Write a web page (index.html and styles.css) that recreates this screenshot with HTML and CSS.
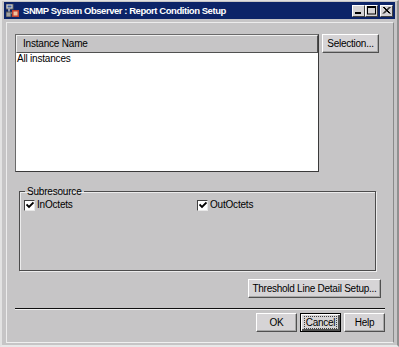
FILE: index.html
```html
<!DOCTYPE html>
<html lang="en">
<head>
    <meta charset="UTF-8">
    <title>SNMP System Observer : Report Condition Setup</title>
    <link rel="stylesheet" href="styles.css">
</head>
<body>

    <div class="window">
        <!-- Title bar -->
        <div class="titlebar">
            <svg class="app-icon" width="13" height="13" viewBox="0 0 13 13">
                <rect x="0" y="0" width="7" height="5" fill="#d8d8d8" stroke="#606060" stroke-width="1"/>
                <rect x="1.5" y="1.5" width="4" height="2" fill="#4060a0"/>
                <rect x="6" y="6" width="7" height="7" fill="#c04030"/>
                <rect x="7.5" y="7.5" width="4" height="4" fill="#f0c0a0"/>
                <path d="M3 5 V9 H6" stroke="#ffffff" stroke-width="1" fill="none"/>
                <rect x="0" y="8" width="5" height="5" fill="#a0a0a0" stroke="#505050" stroke-width="1"/>
            </svg>
            <span class="title">SNMP System Observer : Report Condition Setup</span>
            <div class="win-buttons">
                <span class="win-btn"><svg width="11" height="9" viewBox="0 0 11 9"><rect x="2" y="6" width="6" height="2" fill="#000"/></svg></span>
                <span class="win-btn"><svg width="11" height="9" viewBox="0 0 11 9"><rect x="1.5" y="0.5" width="8" height="7.5" fill="none" stroke="#000"/><rect x="1" y="0" width="9" height="2" fill="#000"/></svg></span>
                <span class="win-btn close"><svg width="11" height="9" viewBox="0 0 11 9"><path d="M2 1 L8.5 7.5 M3 1 L9.5 7.5 M8.5 1 L2 7.5 M9.5 1 L3 7.5" stroke="#000" stroke-width="1"/></svg></span>
            </div>
        </div>

        <!-- Dialog body -->
        <div class="panel">
            <div class="top-row">
                <div class="table">
                    <div class="table-head">Instance Name</div>
                    <div class="table-row">All instances</div>
                </div>
                <button class="btn btn-selection">Selection...</button>
            </div>

            <fieldset class="group">
                <legend>Subresource</legend>
                <div class="checks">
                    <label class="check"><span class="box"><svg width="8" height="8" viewBox="0 0 8 8"><path d="M0.5 3.5 L3 6 L7.5 1.5" stroke="#000" stroke-width="1.8" fill="none"/></svg></span>InOctets</label>
                    <label class="check"><span class="box"><svg width="8" height="8" viewBox="0 0 8 8"><path d="M0.5 3.5 L3 6 L7.5 1.5" stroke="#000" stroke-width="1.8" fill="none"/></svg></span>OutOctets</label>
                </div>
            </fieldset>

            <div class="threshold-row">
                <button class="btn btn-threshold">Threshold Line Detail Setup...</button>
            </div>

            <div class="separator"></div>

            <div class="footer">
                <button class="btn btn-small">OK</button>
                <button class="btn btn-small focused"><span>Cancel</span></button>
                <button class="btn btn-small">Help</button>
            </div>
        </div>
    </div>

</body>
</html>
```

FILE: styles.css
```css
body {
    margin: 0;
    width: 399px;
    height: 347px;
    overflow: hidden;
    background-color: #e4e4e4;
    font-family: "Liberation Sans", Arial, sans-serif;
    font-size: 10px;
    letter-spacing: -0.2px;
    color: #000;
}

.window {
    box-sizing: border-box;
    width: 399px;
    height: 347px;
    padding: 1px 2px 2px 2px;
    background-color: #c6c5c6;
    border-left: 2px solid #e2e2e2;
    border-top: 1px solid #e2e2e2;
    border-right: 2px solid #909090;
    border-bottom: 2px solid #e8e8e8;
    display: flex;
    flex-direction: column;
}

/* Title bar */
.titlebar {
    height: 17px;
    background-color: #0c2468;
    display: flex;
    align-items: center;
    padding: 0 2px 0 2px;
}

.app-icon {
    margin-right: 4px;
}

.title {
    flex: 1;
    color: #fff;
    font-family: "Liberation Sans", Tahoma, sans-serif;
    font-weight: bold;
    font-size: 9.5px;
    letter-spacing: -0.45px;
    white-space: nowrap;
}

.win-buttons {
    display: flex;
}

.win-btn {
    box-sizing: border-box;
    width: 13px;
    height: 12px;
    background-color: #d4d2d4;
    border-top: 1px solid #ffffff;
    border-left: 1px solid #ffffff;
    border-right: 1px solid #404040;
    border-bottom: 1px solid #404040;
    display: flex;
    align-items: center;
    justify-content: center;
}

.win-btn.close {
    margin-left: 2px;
}

/* Dialog body */
.panel {
    flex: 1;
    margin: 3px 1px 0 2px;
    padding: 11px 8px 0 8px;
    border-left: 1px solid #ececec;
    border-top: 1px solid #ececec;
    border-right: 1px solid #8a8a8a;
    border-bottom: 1px solid #f0f0f0;
    display: flex;
    flex-direction: column;
}

.top-row {
    display: flex;
    align-items: flex-start;
}

.table {
    box-sizing: border-box;
    width: 304px;
    height: 138px;
    background-color: #fff;
    border-top: 1px solid #6a6a6a;
    border-left: 1px solid #6a6a6a;
    border-right: 1px solid #3a3a3a;
    border-bottom: 1px solid #3a3a3a;
}

.table-head {
    height: 16px;
    line-height: 16px;
    padding-left: 6px;
    background-color: #c6c5c6;
    border-top: 1px solid #f0f0f0;
    border-left: 1px solid #f0f0f0;
    border-bottom: 1px solid #505050;
    border-right: 1px solid #505050;
}

.table-row {
    padding: 0 0 0 1px;
    height: 11px;
    line-height: 11px;
}

.btn {
    box-sizing: border-box;
    height: 19px;
    padding: 0;
    white-space: nowrap;
    font-family: "Liberation Sans", Arial, sans-serif;
    font-size: 10px;
    letter-spacing: -0.25px;
    color: #000;
    background-color: #d6d4d6;
    border-top: 1px solid #ffffff;
    border-left: 1px solid #ffffff;
    border-right: 1px solid #505050;
    border-bottom: 1px solid #505050;
    box-shadow: inset -1px -1px 0 #a8a8a8;
}

.btn-selection {
    width: 57px;
    margin-left: 3px;
}

/* Subresource group */
.group {
    box-sizing: border-box;
    width: 357px;
    height: 86px;
    margin: 13px 0 0 4px;
    padding: 1px 0 0 4px;
    border: 1px solid #4c4c4c;
    box-shadow: 1px 1px 0 #ececec, inset 1px 1px 0 #ececec;
}

.group legend {
    padding: 0 2px;
    margin-left: 1px;
    line-height: 13px;
}

.checks {
    display: flex;
}

.check {
    width: 173px;
    display: flex;
    align-items: center;
    line-height: 12px;
}

.box {
    box-sizing: border-box;
    width: 11px;
    height: 11px;
    margin-right: 2px;
    background-color: #fff;
    border-top: 1px solid #404040;
    border-left: 1px solid #404040;
    border-right: 1px solid #e8e8e8;
    border-bottom: 1px solid #e8e8e8;
    display: flex;
    align-items: center;
    justify-content: center;
}

.threshold-row {
    display: flex;
    justify-content: flex-end;
    margin: 8px 4px 0 0;
}

.btn-threshold {
    width: 133px;
}

.separator {
    margin-top: 10px;
    height: 1px;
    background-color: #101010;
    border-bottom: 1px solid #f0f0f0;
}

.footer {
    display: flex;
    justify-content: flex-end;
    gap: 3px;
    margin-top: 3px;
}

.btn-small {
    width: 41px;
}

.btn.focused {
    border: 1px solid #000;
    box-shadow: inset 1px 1px 0 #ffffff, inset -2px -2px 0 #505050;
}

.btn.focused span {
    padding: 0 1px;
    outline: 1px dotted #404040;
}
```
